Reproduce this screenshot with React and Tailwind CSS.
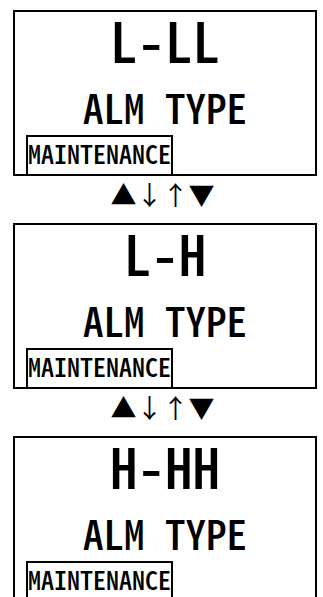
import React from 'react'

// half-width latin from the CJK font gives the narrow LCD-like letters
const lcd = { fontFamily: '"Noto Sans CJK JP", "DejaVu Sans Mono", monospace' }

const screens = [
  { id: 1, label: 'L-LL' },
  { id: 2, label: 'L-H' },
  { id: 3, label: 'H-HH' },
]

function Screen({ label }) {
  return (
    <div className="ml-[13px] w-[304px] h-[166px] border-2 border-black flex flex-col items-center text-black font-medium [font-feature-settings:'hwid']" style={lcd}>
      {/* big alarm range */}
      <div className="h-[54px] leading-[54px] text-[55px] whitespace-nowrap">{label}</div>

      <div className="mt-[18px] h-[44px] leading-[44px] text-[41px] whitespace-nowrap">ALM TYPE</div>

      {/* bottom tag, sits on the panel's bottom border */}
      <div className="self-start ml-[11px] mt-[7px] w-[147px] border-2 border-b-0 border-black pb-[5px]">
        <div className="h-[32px] leading-[32px] text-[26px] whitespace-nowrap">MAINTENANCE</div>
      </div>
    </div>
  )
}

function Arrows() {
  return (
    <div
      className="h-[47px] flex justify-center items-start pl-[2px] text-[26px] leading-[36px] text-black"
      style={{ fontFamily: '"Noto Sans CJK JP", "DejaVu Sans", sans-serif' }}
    >
      <span>▲↓↑▼</span>
    </div>
  )
}

export default function App() {
  return (
    <div className="w-[323px] bg-white pt-[10px] pb-[10px]">
      {screens.map((s, i) => (
        <React.Fragment key={s.id}>
          {i > 0 && <Arrows />}
          <Screen label={s.label} />
        </React.Fragment>
      ))}
    </div>
  )
}
